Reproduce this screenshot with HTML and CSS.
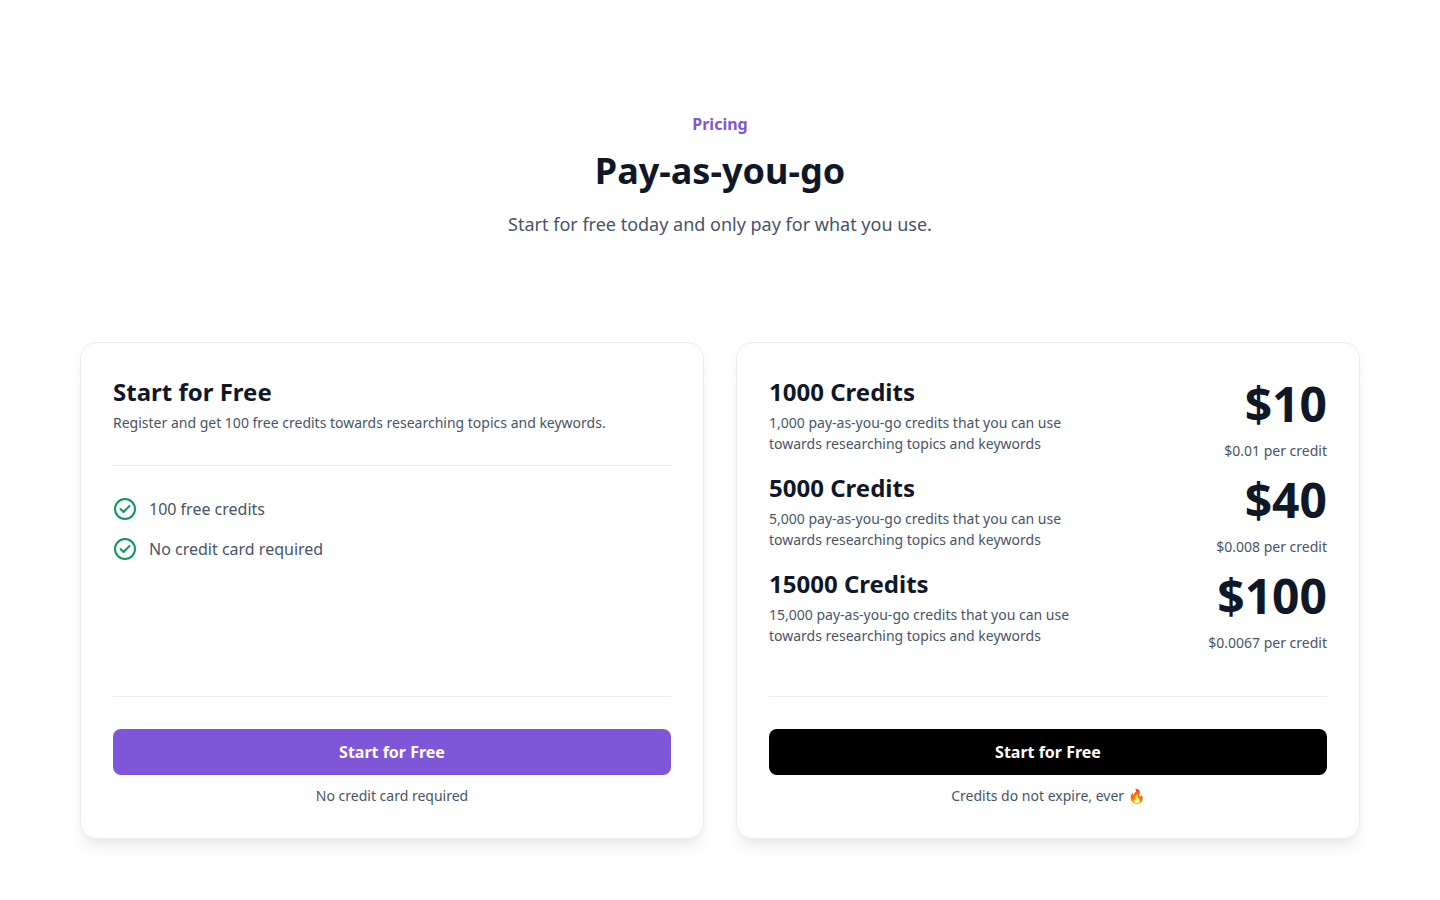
FILE: index.html
```html
<!DOCTYPE html>
<html lang="en">
<head>
  <meta charset="UTF-8">
  <meta name="viewport" content="width=device-width, initial-scale=1.0">
  <title>Pricing</title>
  <link rel="stylesheet" href="styles.css">
</head>
<body>
  <main class="pricing">
    <header class="pricing-header">
      <p class="eyebrow">Pricing</p>
      <h1>Pay-as-you-go</h1>
      <p class="lead">Start for free today and only pay for what you use.</p>
    </header>

    <div class="cards">
      <section class="card">
        <div class="plan">
          <h2>Start for Free</h2>
          <p class="small">Register and get 100 free credits towards researching topics and keywords.</p>
        </div>
        <ul class="features">
          <li>
            <svg class="check" viewBox="0 0 24 24" aria-hidden="true">
              <circle cx="12" cy="12" r="10"></circle>
              <path d="M7.5 12l3 3 6-6"></path>
            </svg>
            100 free credits
          </li>
          <li>
            <svg class="check" viewBox="0 0 24 24" aria-hidden="true">
              <circle cx="12" cy="12" r="10"></circle>
              <path d="M7.5 12l3 3 6-6"></path>
            </svg>
            No credit card required
          </li>
        </ul>
        <div class="card-footer">
          <button type="button" class="btn btn-purple">Start for Free</button>
          <p class="small">No credit card required</p>
        </div>
      </section>

      <section class="card">
        <div class="tiers">
          <div class="tier">
            <div class="tier-info">
              <h2>1000 Credits</h2>
              <p class="small">1,000 pay-as-you-go credits that you can use towards researching topics and keywords</p>
            </div>
            <div class="tier-price">
              <p class="price">$10</p>
              <p class="small">$0.01 per credit</p>
            </div>
          </div>
          <div class="tier">
            <div class="tier-info">
              <h2>5000 Credits</h2>
              <p class="small">5,000 pay-as-you-go credits that you can use towards researching topics and keywords</p>
            </div>
            <div class="tier-price">
              <p class="price">$40</p>
              <p class="small">$0.008 per credit</p>
            </div>
          </div>
          <div class="tier">
            <div class="tier-info">
              <h2>15000 Credits</h2>
              <p class="small">15,000 pay-as-you-go credits that you can use towards researching topics and keywords</p>
            </div>
            <div class="tier-price">
              <p class="price">$100</p>
              <p class="small">$0.0067 per credit</p>
            </div>
          </div>
        </div>
        <div class="card-footer">
          <button type="button" class="btn btn-black">Start for Free</button>
          <p class="small">Credits do not expire, ever 🔥</p>
        </div>
      </section>
    </div>
  </main>
</body>
</html>
```

FILE: styles.css
```css
* {
  margin: 0;
  padding: 0;
  box-sizing: border-box;
}

body {
  font-family: "Noto Sans", sans-serif;
  font-size: 16px;
  line-height: 24px;
  color: #475467;
  background-color: #fff;
}

h1,
h2,
.price {
  font-weight: 700;
  color: #101828;
}

.pricing {
  max-width: 1344px;
  margin: 0 auto;
  padding: 112px 32px 60px;
}

.pricing-header {
  text-align: center;
  margin-bottom: 104px;
}

.eyebrow {
  font-weight: 700;
  color: #8056d9;
}

h1 {
  font-size: 36px;
  line-height: 46px;
  margin: 12px 0 16px;
}

.lead {
  font-size: 18px;
  line-height: 28px;
}

.cards {
  display: grid;
  grid-template-columns: 1fr 1fr;
  gap: 32px;
}

.card {
  display: flex;
  flex-direction: column;
  padding: 32px;
  border: 1px solid #eaecf0;
  border-radius: 16px;
  box-shadow: 0 10px 15px -3px rgba(0, 0, 0, 0.08), 0 4px 6px -2px rgba(0, 0, 0, 0.04);
}

h2 {
  font-size: 24px;
  line-height: 34px;
  margin-bottom: 3px;
}

.small {
  font-size: 14px;
  line-height: 21px;
}

.plan {
  padding-bottom: 32px;
  border-bottom: 1px solid #eaecf0;
}

.features {
  list-style: none;
  display: flex;
  flex-direction: column;
  gap: 16px;
  padding: 31px 0;
}

.features li {
  display: flex;
  align-items: center;
  gap: 12px;
}

.check {
  width: 24px;
  height: 24px;
  fill: none;
  stroke: #0a9958;
  stroke-width: 2;
  stroke-linecap: round;
  stroke-linejoin: round;
}

.tiers {
  display: flex;
  flex-direction: column;
  gap: 10px;
  margin-bottom: 43px;
}

.tier {
  display: flex;
  justify-content: space-between;
  gap: 32px;
}

.tier-info {
  max-width: 320px;
}

.tier-price {
  text-align: right;
}

.price {
  font-size: 48px;
  line-height: 58px;
  margin-bottom: 7px;
}

/* keeps the buttons of both cards on one line */
.card-footer {
  margin-top: auto;
  padding-top: 32px;
  border-top: 1px solid #eaecf0;
  text-align: center;
}

.btn {
  display: block;
  width: 100%;
  height: 46px;
  margin-bottom: 10px;
  border: none;
  border-radius: 8px;
  font-family: inherit;
  font-size: 16px;
  font-weight: 700;
  color: #fff;
  cursor: pointer;
}

.btn-purple {
  background-color: #8056d9;
}

.btn-black {
  background-color: #000;
}

@media (max-width: 900px) {
  .cards {
    grid-template-columns: 1fr;
  }
}
```
